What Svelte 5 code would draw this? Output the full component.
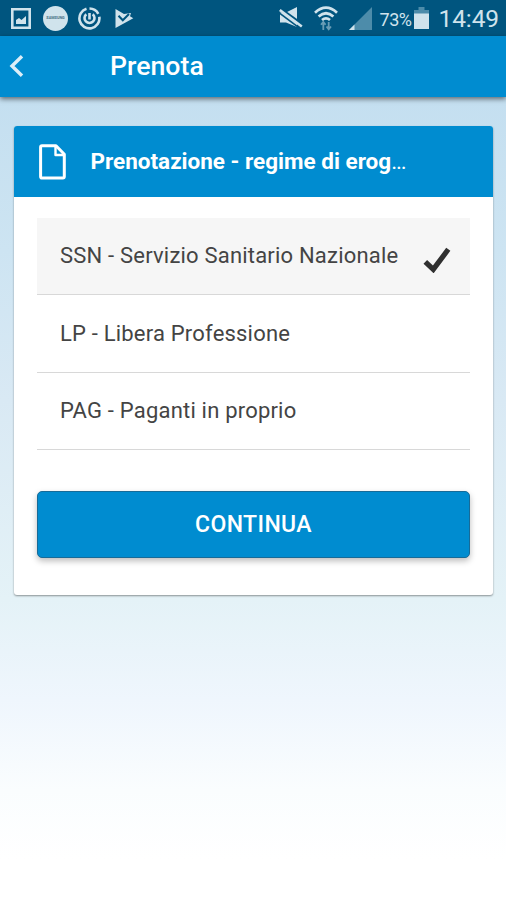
<script lang="ts">
	const options = ['SSN - Servizio Sanitario Nazionale', 'LP - Libera Professione', 'PAG - Paganti in proprio'];
	let selected = $state(0);
</script>

<div class="screen">
	<div class="status">
		<div class="notifications">
			<svg width="20" height="21" viewBox="0 0 20 21">
				<path d="M1.3 1.3h17.4v18.4H1.3z" fill="none" stroke="currentColor" stroke-width="2.6" />
				<path d="M5 16v-4l3-2 2.5 2 4.5-4v8z" fill="currentColor" />
			</svg>
			<span class="badge">SAMSUNG</span>
			<svg class="power" width="23" height="23" viewBox="0 0 23 23" fill="none" stroke="currentColor" stroke-width="2.6">
				<path d="M8.5 1.8a10 10 0 1 0 12.8 8M11.5 1.5a10 10 0 0 1 8.8 5.3" />
				<path d="M8.3 7.2a5 5 0 1 0 6.4 0M11.5 6v6.5" />
			</svg>
			<svg class="play" width="19" height="21" viewBox="0 0 19 21">
				<path d="M.5 1 9 6l7-1-1 3.3 3.3 1.9L.5 20z" fill="currentColor" />
				<path d="m3.5 7.7 4.3 4.5L14 6" fill="none" stroke="#00557f" stroke-width="2" />
			</svg>
		</div>
		<div class="system">
			<svg width="24" height="22" viewBox="0 0 24 22">
				<path d="M1 5.5h6L18 0v20L7 15.5H1z" fill="currentColor" />
				<path d="M0 .5 23 17" stroke="#00557f" stroke-width="2.4" />
				<path d="m.8 3 22 16.5" stroke="currentColor" stroke-width="2.6" />
				<path d="m.2 5.8 21 15.8" stroke="#00557f" stroke-width="1.6" />
			</svg>
			<svg class="wifi" width="24" height="25" viewBox="0 0 24 25" fill="none" stroke="currentColor" stroke-width="2.7">
				<path d="M1 6.7q11-10 22 0M4.6 10.5q7.4-6.5 14.8 0M8 14q4-3.4 8 0" />
				<path d="M9.3 24v-7M7 18.8 9.3 16l2.3 2.8M14.7 16v7M12.5 20.5l2.2 2.8 2.3-2.8" stroke-width="1.8" opacity=".5" />
			</svg>
			<svg class="signal" width="23" height="23" viewBox="0 0 23 23">
				<path d="M0 23 23 0v23z" fill="#4d8caa" />
				<path d="m0 23 5.5-5.5V23z" fill="currentColor" />
			</svg>
			<span class="percent">73%</span>
			<svg class="battery" width="15" height="22" viewBox="0 0 15 22">
				<path d="M4.5 0h6v3H15v4H0V3h4.5z" fill="#4d8caa" />
				<path d="M0 6.5h15V22H0z" fill="currentColor" />
			</svg>
			<span class="time">14:49</span>
		</div>
	</div>

	<header>
		<button class="back" aria-label="Indietro">
			<svg width="15" height="22" viewBox="0 0 15 22">
				<path d="M13 1.2 3 11l10 9.8" fill="none" stroke="currentColor" stroke-width="3.4" />
			</svg>
		</button>
		<h1>Prenota</h1>
	</header>

	<main>
		<section class="card">
			<div class="card-head">
				<svg width="27" height="36" viewBox="0 0 27 36" fill="none" stroke="currentColor" stroke-width="3" stroke-linejoin="round">
					<path d="M3 1.7h14l8.3 8.6v22.2q0 1.5-1.5 1.5H3q-1.4 0-1.4-1.5V3.2Q1.6 1.7 3 1.7z" />
					<path d="M16.5 2.5V11H25" stroke-width="2.4" />
				</svg>
				<h2>Prenotazione - regime di erog<span>...</span></h2>
			</div>
			<div class="body">
				{#each options as option, i}
					<button class="option" class:selected={selected === i} onclick={() => (selected = i)}>
						<span>{option}</span>
						{#if selected === i}
							<svg width="28" height="26" viewBox="0 0 28 26">
								<path d="m2.3 14.8 8 7.6L25.3 2.3" fill="none" stroke="#303030" stroke-width="5.2" />
							</svg>
						{/if}
					</button>
				{/each}
				<button class="submit">CONTINUA</button>
			</div>
		</section>
	</main>
</div>

<style>
	:global(body) { margin: 0; }
	.screen {
		height: 900px; display: flex; flex-direction: column; overflow: hidden;
		font-family: Roboto, sans-serif;
		background: linear-gradient(#c4dff0 97px, #cde4f2 250px, #d9e9f4 400px, #e4f2f7 600px, #eff6fd 700px, #fafdfe 790px, #fff 860px);
	}
	button { border: 0; padding: 0; background: none; font: inherit; color: inherit; }
	svg { display: block; flex: none; }

	.status {
		height: 36px; box-sizing: border-box; padding: 0 7px 0 11px; flex: none;
		display: flex; align-items: center; justify-content: space-between;
		background: #00557f; color: #d0e3ec;
	}
	.notifications, .system { display: flex; align-items: center; }
	.badge {
		width: 25px; height: 25px; margin-left: 12px; border-radius: 50%;
		display: flex; align-items: center; justify-content: center;
		background: #d0e3ec; color: #456f85; font-size: 3.8px; line-height: 8px; font-weight: 700;
	}
	.power { margin-left: 10px; }
	.play { margin-left: 14px; }
	.wifi { margin-left: 11px; }
	.signal { margin-left: 11px; }
	.percent { margin-left: 8px; font-size: 18px; letter-spacing: -0.5px; padding-top: 2px; }
	.battery { margin-left: 3px; }
	.time { margin-left: 9px; font-size: 24.5px; letter-spacing: -0.1px; line-height: 34px; padding-top: 2px; }

	header {
		height: 61px; flex: none; display: flex; align-items: center; z-index: 1;
		background: #008cd0; color: #fff; box-shadow: 0 2px 5px #0008;
	}
	.back { margin: -2px 0 0 9px; color: #dceef8; }
	h1 { margin: -1px 0 0 86px; font-size: 26.7px; font-weight: 500; line-height: 32px; }

	main { padding: 29px 13px 0 14px; }
	.card { height: 469px; background: #fff; border-radius: 3px; box-shadow: 0 1px 2px #0006; }
	.card-head {
		height: 71px; box-sizing: border-box; padding-left: 25px;
		display: flex; align-items: center; gap: 24.5px;
		background: #008cd0; color: #fff; border-radius: 3px 3px 0 0;
	}
	h2 { margin: -1px 0 0; font-size: 22.5px; font-weight: 700; white-space: nowrap; }
	h2 span { font-weight: 400; letter-spacing: -1.1px; }
	.body { padding: 21px 23px 0; display: flex; flex-direction: column; }
	.option {
		height: 77.4px; box-sizing: border-box; padding: 0 19px 1px 23px;
		display: flex; align-items: center; justify-content: space-between;
		border-bottom: 1.5px solid #d8d8d8; color: #444; font-size: 22px; letter-spacing: 0.2px; white-space: nowrap;
	}
	.option svg { margin-top: 9px; }
	.selected { background: #f6f6f6; }
	.submit {
		height: 67px; box-sizing: border-box; margin-top: 40.8px; border: 1px solid #176b98; border-radius: 5px;
		background: #008cd0; color: #fff; font-size: 23px; font-weight: 500; letter-spacing: 0.4px;
		box-shadow: 0 3px 6px #0004;
	}
</style>
